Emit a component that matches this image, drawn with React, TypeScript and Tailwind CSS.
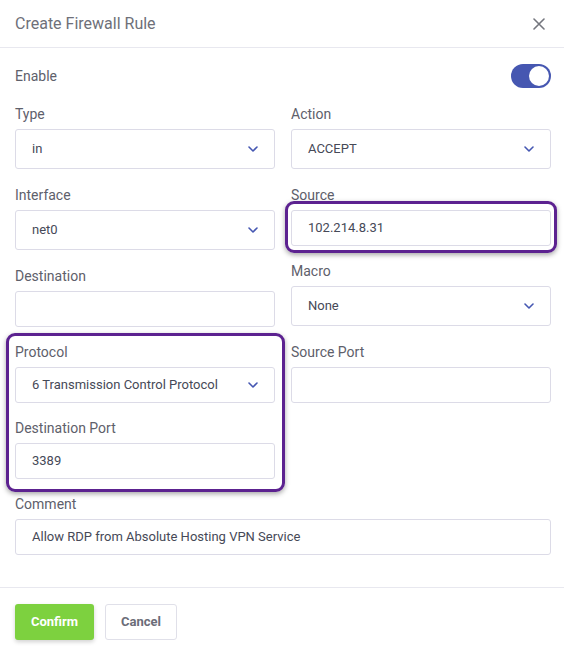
import React from 'react';

const FONT = "font-['Roboto','Liberation_Sans',sans-serif]";

function Chevron() {
  return (
    <svg width="10" height="6" viewBox="0 0 10 6" fill="none" className="shrink-0">
      <path d="M1 1l4 4 4-4" stroke="#4557b2" strokeWidth="1.6" strokeLinecap="round" strokeLinejoin="round" />
    </svg>
  );
}

function Field({ label, className, children }: { label: string; className?: string; children: React.ReactNode }) {
  return (
    <div className={className}>
      <div className="h-[20px] leading-[20px] text-[14px] text-[#5e606b] mb-[5px]">{label}</div>
      {children}
    </div>
  );
}

function Select({ value, tall = true }: { value: string; tall?: boolean }) {
  return (
    <div
      className={`${tall ? 'h-[40px]' : 'h-[36px]'} flex items-center justify-between pl-4 pr-[16px] border border-[#dcdbe7] rounded-[3px] bg-white text-[13px] text-[#464957]`}
    >
      <span>{value}</span>
      <Chevron />
    </div>
  );
}

function TextInput({ value }: { value?: string }) {
  return (
    <div className="h-[36px] flex items-center pl-4 border border-[#dcdbe7] rounded-[3px] bg-white text-[13px] text-[#464957]">
      {value}
    </div>
  );
}

export default function App() {
  return (
    <div className={`${FONT} w-[564px] h-[654px] bg-white overflow-hidden`}>
      <div className="h-[48px] flex items-center justify-between pl-[15px] pr-[19px] border-b border-[#e8e8ef]">
        <span className="text-[16px] text-[#6e7079]">Create Firewall Rule</span>
        <svg width="12" height="12" viewBox="0 0 12 12">
          <path d="M1 1l10 10M11 1L1 11" stroke="#74767e" strokeWidth="1.6" strokeLinecap="round" />
        </svg>
      </div>

      <div className="pt-[16px] pl-[15px] pr-[13px] pb-[32px]">
        <div className="h-[24px] flex items-center justify-between mb-[16px]">
          <span className="text-[14px] text-[#5e606b]">Enable</span>
          <div className="w-[40px] h-[24px] rounded-full bg-[#4657b1] flex items-center justify-end pr-[2px]">
            <div className="w-[20px] h-[20px] rounded-full bg-white" />
          </div>
        </div>

        <div className="grid grid-cols-2 gap-x-[16px] items-start">
          <div className="flex flex-col">
            <Field label="Type">
              <Select value="in" />
            </Field>
            <Field label="Interface" className="mt-[16px]">
              <Select value="net0" />
            </Field>
            <Field label="Destination" className="mt-[16px]">
              <TextInput />
            </Field>
            <div className="relative mt-[15px]">
              <div className="absolute -left-[9px] -right-[10px] -top-[9px] -bottom-[13px] border-[3px] border-[#5c2290] rounded-[9px] shadow-[0_2px_5px_rgba(0,0,0,0.35)] pointer-events-none" />
              <Field label="Protocol">
                <Select value="6 Transmission Control Protocol" tall={false} />
              </Field>
              <Field label="Destination Port" className="mt-[15px]">
                <TextInput value="3389" />
              </Field>
            </div>
          </div>

          <div className="flex flex-col">
            <Field label="Action">
              <Select value="ACCEPT" />
            </Field>
            <Field label="Source" className="mt-[16px]">
              <div className="relative">
                <div className="absolute -left-[6px] -right-[6px] -top-[9px] -bottom-[7px] border-[3px] border-[#5c2290] rounded-[9px] shadow-[0_2px_5px_rgba(0,0,0,0.35)] pointer-events-none" />
                <TextInput value="102.214.8.31" />
              </div>
            </Field>
            <Field label="Macro" className="mt-[15px]">
              <Select value="None" />
            </Field>
            <Field label="Source Port" className="mt-[16px]">
              <TextInput />
            </Field>
          </div>
        </div>

        <Field label="Comment" className="mt-[15px]">
          <TextInput value="Allow RDP from Absolute Hosting VPN Service" />
        </Field>
      </div>

      <div className="border-t border-[#e8e8ef] pt-[16px] pl-[15px] flex gap-[11px]">
        <button className="w-[79px] h-[36px] rounded-[3px] bg-[#7dd13f] text-white text-[13px] font-bold shadow-[0_2px_4px_rgba(0,0,0,0.18)]">
          Confirm
        </button>
        <button className="w-[72px] h-[36px] rounded-[3px] bg-white border border-[#e0e0e9] text-[#6b6d78] text-[13px] font-bold">
          Cancel
        </button>
      </div>
    </div>
  );
}
